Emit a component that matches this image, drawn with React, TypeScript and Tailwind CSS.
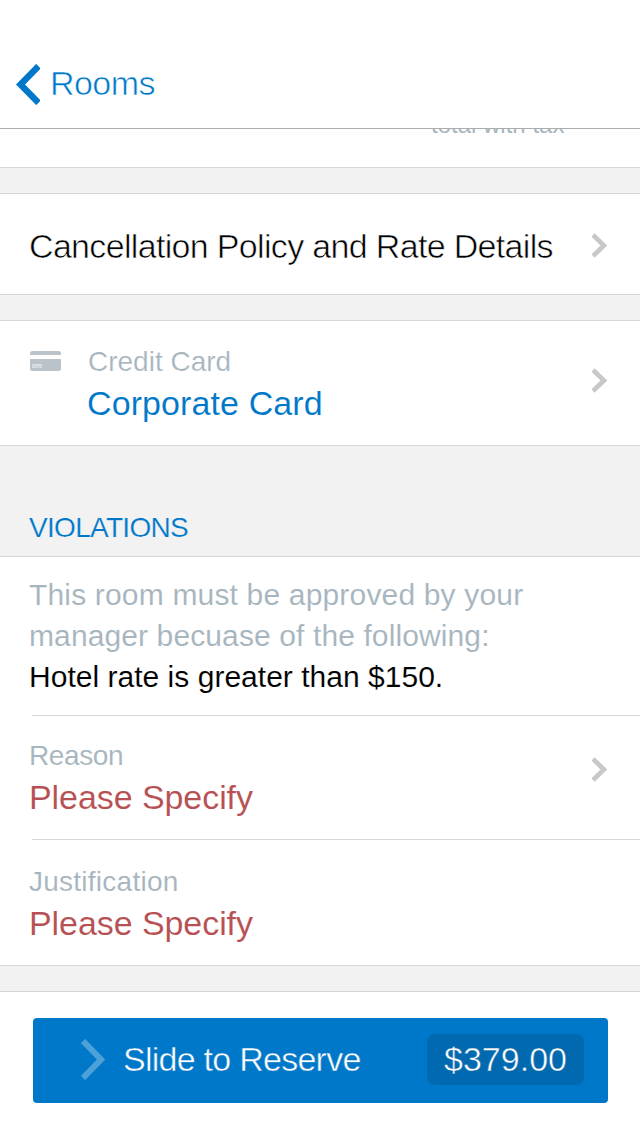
import React from "react";

function Chevron() {
  return (
    <svg className="h-[26px] w-4 shrink-0" viewBox="0 0 16 26" fill="none" stroke="#c8c8c8" strokeWidth="4.700">
      <path d="M1 1.900 11.900 12.500 1 23.100" />
    </svg>
  );
}

function Gap() {
  return <div className="h-[27px] shrink-0 border-y border-[#d5d6d7] bg-[#f2f2f2]" />;
}

function CardIcon() {
  return (
    <svg className="mt-[30px] h-5 w-[31px] shrink-0" viewBox="0 0 31 20">
      <path fill="#bbc3ca" d="M0 4V2.500A2.500 2.500 0 0 1 2.500 0h26A2.500 2.500 0 0 1 31 2.500V4z" />
      <path fill="#bbc3ca" d="M0 8h31v9.500a2.500 2.500 0 0 1-2.500 2.500h-26A2.500 2.500 0 0 1 0 17.500z" />
      <path fill="#dde1e4" d="M2 13h10v4H2z" />
      <path stroke="#bbc3ca" strokeWidth=".5" d="M5 15v2M9 15v2M2 15h3.500M8.500 15H12" />
      <path stroke="#bbc3ca" strokeWidth=".8" d="M7 15.500v1.500" />
    </svg>
  );
}

export default function App() {
  return (
    <div className="flex h-[1135px] w-[640px] flex-col overflow-hidden whitespace-nowrap bg-white font-['Liberation_Sans',Arial,sans-serif] text-black">
      <header className="flex h-[129px] shrink-0 items-start border-b border-[#acadae] pl-4 pt-16 text-[#0078c9]">
        <svg className="h-[41px] w-6" viewBox="0 0 24 41" fill="none" stroke="#0078c9" strokeWidth="6.500">
          <path d="M22.500 2.200 4.500 20.500 22.500 38.800" />
        </svg>
        <span className="ml-[10px] text-[34px] leading-[38px] tracking-[-0.55px] [-webkit-text-stroke:0.6px_#fff]">Rooms</span>
      </header>

      <div className="flex h-[38px] shrink-0 items-start overflow-hidden">
        <span className="-mt-[18px] ml-[431px] text-[24px] leading-7 text-[#a7b5be]">total with tax</span>
      </div>
      <Gap />

      <section className="flex h-[100px] shrink-0 items-center justify-between pl-[29px] pr-8">
        <span className="pt-1 text-[34px] leading-[40px] tracking-[-0.67px] [-webkit-text-stroke:0.6px_#fff]">
          Cancellation Policy and Rate Details
        </span>
        <span className="pt-[3px]"><Chevron /></span>
      </section>
      <Gap />

      <section className="flex h-[124px] shrink-0 pl-[30px] pr-8">
        <CardIcon />
        <div className="ml-[26px] flex grow flex-col pt-[20px] leading-[42px]">
          <span className="pl-px text-[28px] text-[#a7b5be] [-webkit-text-stroke:0.2px_#fff]">Credit Card</span>
          <span className="-mt-px text-[34px] tracking-[0.1px] text-[#0078c9] [-webkit-text-stroke:0.1px_#fff]">Corporate Card</span>
        </div>
        <span className="pt-[47px]"><Chevron /></span>
      </section>

      <div className="h-[112px] shrink-0 border-y border-[#d5d6d7] bg-[#f2f2f2] pl-[29px] pt-[61px]">
        <h2 className="text-[28px] leading-[42px] tracking-[-0.7px] text-[#0078c9] [-webkit-text-stroke:0.2px_#f2f2f2]">VIOLATIONS</h2>
      </div>

      <section className="flex h-[158px] shrink-0 flex-col pl-[29px] pt-[17px] text-[30px] leading-[41px] [-webkit-text-stroke:0.1px_#fff]">
        <span className="tracking-[0.17px] text-[#a7b5be]">This room must be approved by your</span>
        <span className="tracking-[0.11px] text-[#a7b5be]">manager becuase of the following:</span>
        <span className="tracking-[0.02px]">Hotel rate is greater than $150.</span>
      </section>

      <div className="ml-8 h-px shrink-0 bg-[#d5d6d7]" />
      <section className="flex h-[123px] shrink-0 justify-between pl-[29px] pr-8">
        <div className="flex flex-col pt-[19px] leading-[42px] [-webkit-text-stroke:0.1px_#fff]">
          <span className="text-[28px] tracking-[-0.4px] text-[#a7b5be]">Reason</span>
          <span className="-mt-px text-[34px] tracking-[-0.07px] text-[#b75053]">Please Specify</span>
        </div>
        <span className="pt-[41px]"><Chevron /></span>
      </section>

      <div className="ml-8 h-px shrink-0 bg-[#d5d6d7]" />
      <section className="flex h-[125px] shrink-0 flex-col pl-[29px] pt-[21px] leading-[42px] [-webkit-text-stroke:0.1px_#fff]">
        <span className="text-[28px] tracking-[0.25px] text-[#a7b5be]">Justification</span>
        <span className="-mt-px text-[34px] tracking-[-0.07px] text-[#b75053]">Please Specify</span>
      </section>
      <Gap />

      <footer className="h-[143px] shrink-0 pl-[33px] pr-8 pt-[26px]">
        <button className="flex h-[85px] w-full items-center rounded-[4px] bg-[#0078c9] pl-12 pr-6 text-left text-white">
          <svg className="-mt-[2px] h-[41px] w-6" viewBox="0 0 24 41" fill="none" stroke="#4da1d9" strokeWidth="6">
            <path d="M2 2 20 20.500 2 39" />
          </svg>
          <span className="-mt-[4px] ml-[18px] text-[34px] leading-[42px] tracking-[-0.74px] [-webkit-text-stroke:0.5px_#0078c9]">
            Slide to Reserve
          </span>
          <span className="-mt-[3px] ml-auto flex h-[51px] w-[157px] items-center justify-center rounded-[8px] bg-[#0069af] text-[34px] [-webkit-text-stroke:0.5px_#0069af]">
            $379.00
          </span>
        </button>
      </footer>
    </div>
  );
}
